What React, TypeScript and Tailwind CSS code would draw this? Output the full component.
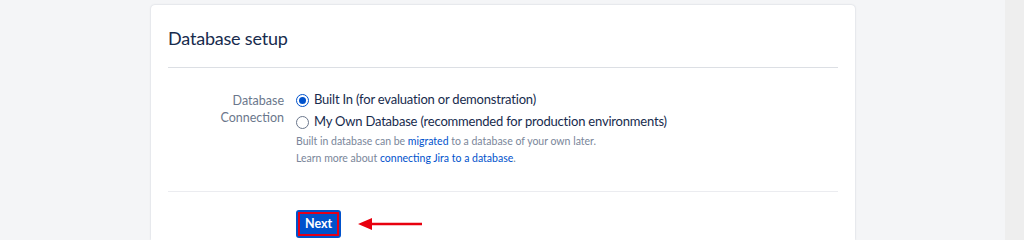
import React from 'react';

const font = { fontFamily: 'Lato, "Noto Sans", sans-serif' };

const Radio = ({ checked }: { checked: boolean }) => (
  <span
    className={`inline-flex h-[13px] w-[13px] shrink-0 items-center justify-center rounded-full border ${
      checked ? 'border-[#0052cc] border-[1.5px]' : 'border-[#6b778c]'
    } bg-white`}
  >
    {checked && <span className="h-[7px] w-[7px] rounded-full bg-[#0052cc]" />}
  </span>
);

export default function App() {
  return (
    <div className="flex h-[240px] w-[1024px] overflow-hidden bg-[#f4f5f7]" style={font}>
      <div className="flex flex-1 pl-[151px] pt-[5px]">
        <div className="w-[704px] rounded-t-[4px] bg-white shadow-[0_0_2px_rgba(9,30,66,0.2)]">
          <div className="px-[17px]">
            <h1 className="pt-[20px] pb-[16px] text-[18px] leading-[26px] tracking-[-0.2px] text-[#172b4d]">
              Database setup
            </h1>
            <div className="h-px bg-[#dcdfe4]" />

            <div className="flex pt-[21px] pb-[24px]">
              <div className="mt-[3px] w-[116px] text-right text-[12.5px] leading-[17px] text-[#6b778c]">
                <div>Database</div>
                <div>Connection</div>
              </div>
              <div className="ml-[12px] flex flex-col">
                <label className="flex h-[22px] items-center gap-[5px] text-[13px] tracking-[-0.2px] text-[#172b4d]">
                  <Radio checked />
                  Built In (for evaluation or demonstration)
                </label>
                <label className="flex h-[22px] items-center gap-[5px] text-[13px] tracking-[-0.2px] text-[#172b4d]">
                  <Radio checked={false} />
                  My Own Database (recommended for production environments)
                </label>
                <p className="text-[10.5px] leading-[17px] text-[#7a869a]">
                  Built in database can be <span className="text-[#0052cc]">migrated</span> to a database of your own later.
                </p>
                <p className="text-[10.5px] leading-[17px] text-[#7a869a]">
                  Learn more about <span className="text-[#0052cc]">connecting Jira to a database</span>.
                </p>
              </div>
            </div>

            <div className="h-px bg-[#ebecf0]" />

            <div className="flex items-center pl-[128px] pt-[18px]">
              <button className="h-[28px] rounded-[3px] bg-[#0052cc] px-[2px] py-[2px]">
                <span className="flex h-[24px] items-center border-2 border-[#e2001a] px-[5px] text-[12.5px] font-bold text-white">
                  Next
                </span>
              </button>
              <svg width="64" height="14" viewBox="0 0 64 14" className="ml-[17px]">
                <path d="M64 5.8 L14 5.8 L14 1 L0 7 L14 13 L14 8.2 L64 8.2 Z" fill="#e8000f" />
              </svg>
            </div>
          </div>
        </div>
      </div>
      <div className="w-[19px] bg-[#eeeeee]" />
    </div>
  );
}
